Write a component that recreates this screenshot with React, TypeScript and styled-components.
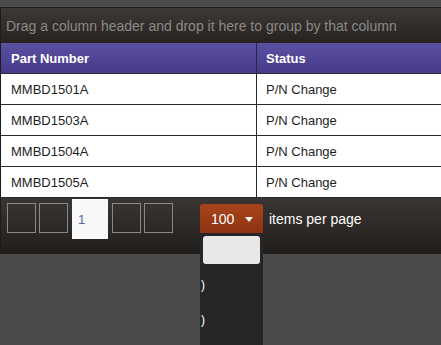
import React from "react";
import styled, { createGlobalStyle } from "styled-components";

const Global = createGlobalStyle`
  html, body { margin: 0; padding: 0; background: #4b4b4b; overflow: hidden; }
  body { font-family: "Liberation Sans", Arial, sans-serif; width: 441px; height: 345px; }
`;

const Page = styled.div`
  padding-top: 7px;
  width: 441px;
  height: 338px;
  overflow: hidden;
`;

const Grid = styled.div`
  width: 470px;
  border: 1px solid #1e1c1b;
  border-right: none;
  background: #2a2725;
`;

const GroupBar = styled.div`
  height: 35px;
  display: flex;
  align-items: center;
  padding-left: 5px;
  background: linear-gradient(#3c3937, #252220);
  color: #8c8a88;
  font-size: 14px;
`;

const Table = styled.div`
  display: grid;
  grid-template-columns: 255px 1fr;
`;

const HeadCell = styled.div<{ $first?: boolean }>`
  height: 30px;
  display: flex;
  align-items: center;
  padding-left: ${(p) => (p.$first ? "10px" : "9px")};
  background: linear-gradient(#5c50a2, #45398a);
  color: #fff;
  font-weight: bold;
  font-size: 13px;
  border-left: ${(p) => (p.$first ? "none" : "1px solid #2a2447")};
`;

const Cell = styled.div<{ $first?: boolean }>`
  height: 30px;
  display: flex;
  align-items: center;
  padding-left: ${(p) => (p.$first ? "10px" : "9px")};
  background: #fff;
  color: #1e1e1e;
  font-size: 13px;
  border-top: 1px solid #2c2a28;
  border-left: ${(p) => (p.$first ? "none" : "1px solid #2c2a28")};
`;

const Pager = styled.div`
  height: 55px;
  display: flex;
  align-items: flex-start;
  padding-left: 6px;
  border-top: 1px solid #2c2a28;
  background: linear-gradient(#3a3633, #211e1c);
`;

const PageBtn = styled.div`
  width: 27px;
  height: 28px;
  margin-top: 5px;
  border: 1px solid #8a8886;
  margin-right: 3px;
`;

const CurrentPage = styled.div`
  width: 30px;
  height: 40px;
  padding-left: 6px;
  margin-top: 1px;
  margin-left: 1px;
  margin-right: 4px;
  background: #f8f8f8;
  color: #52669c;
  font-size: 13px;
  display: flex;
  align-items: center;
`;

const SizeWrap = styled.div`
  position: relative;
  margin-left: 24px;
  margin-top: 6px;
`;

const SizeBtn = styled.div`
  width: 52px;
  height: 29px;
  padding-left: 11px;
  display: flex;
  align-items: center;
  gap: 11px;
  border-radius: 3px 3px 0 0;
  background: linear-gradient(#a9441b, #8c3312);
  color: #fff;
  font-size: 14px;
`;

const Arrow = styled.span`
  width: 0;
  height: 0;
  border-left: 4px solid transparent;
  border-right: 4px solid transparent;
  border-top: 5px solid #fff;
  margin-top: 1px;
`;

const ItemsLabel = styled.div`
  margin-left: 6px;
  margin-top: 6px;
  height: 29px;
  display: flex;
  align-items: center;
  color: #fff;
  font-size: 14px;
`;

const Popup = styled.div`
  position: absolute;
  left: 0;
  top: 29px;
  width: 63px;
  height: 120px;
  background: #262626;
  padding-top: 3px;
  box-sizing: border-box;
`;

const PopItem = styled.div<{ $sel?: boolean }>`
  height: ${(p) => (p.$sel ? "28px" : "35px")};
  margin: ${(p) => (p.$sel ? "0 3px 3px 3px" : "0")};
  border-radius: 3px;
  background: ${(p) => (p.$sel ? "#e8e8e8" : "transparent")};
  color: #fff;
  font-size: 12px;
  display: flex;
  align-items: center;
  padding-left: 1px;
`;

const rows = ["MMBD1501A", "MMBD1503A", "MMBD1504A", "MMBD1505A"];

export default function App() {
  return (
    <Page>
      <Global />
      <Grid>
        <GroupBar>Drag a column header and drop it here to group by that column</GroupBar>
        <Table>
          <HeadCell $first>Part Number</HeadCell>
          <HeadCell>Status</HeadCell>
          {rows.map((r) => (
            <React.Fragment key={r}>
              <Cell $first>{r}</Cell>
              <Cell>P/N Change</Cell>
            </React.Fragment>
          ))}
        </Table>
        <Pager>
          <PageBtn />
          <PageBtn />
          <CurrentPage>1</CurrentPage>
          <PageBtn />
          <PageBtn />
          <SizeWrap>
            <SizeBtn>
              100 <Arrow />
            </SizeBtn>
            <Popup>
              <PopItem $sel />
              <PopItem>)</PopItem>
              <PopItem>)</PopItem>
            </Popup>
          </SizeWrap>
          <ItemsLabel>items per page</ItemsLabel>
        </Pager>
      </Grid>
    </Page>
  );
}
